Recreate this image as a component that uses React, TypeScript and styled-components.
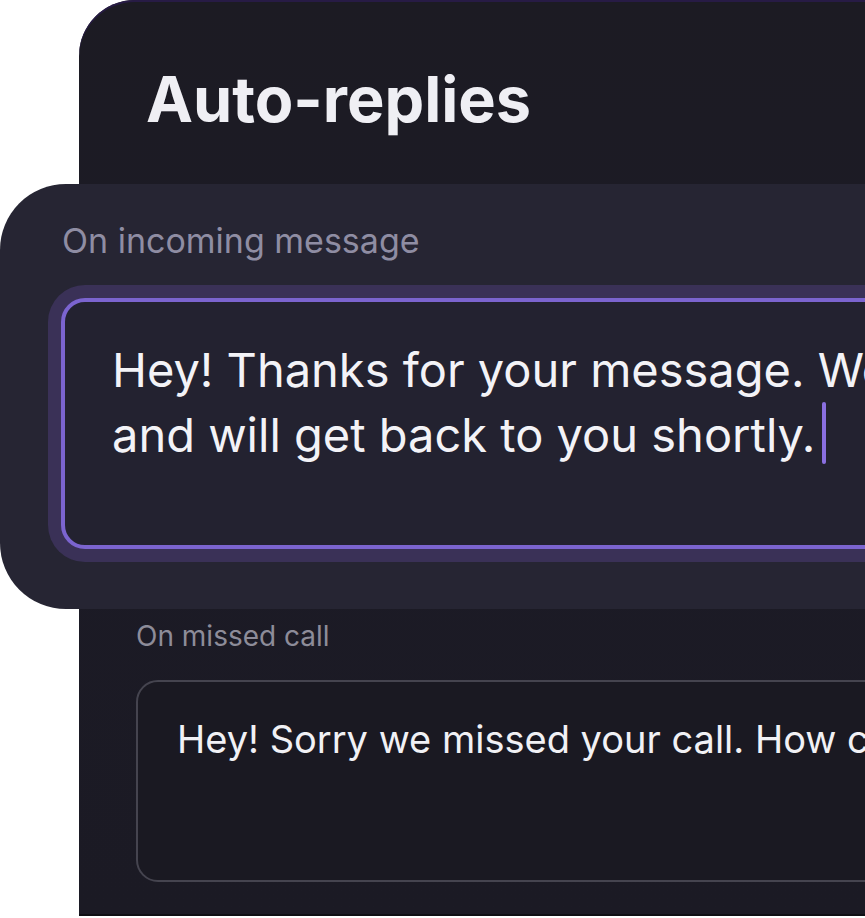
import styled, { createGlobalStyle } from 'styled-components'

const GlobalStyle = createGlobalStyle`
  html, body {
    margin: 0;
    padding: 0;
    background: #ffffff;
  }

  body {
    font-family: Inter, "Noto Sans", "Liberation Sans", sans-serif;
    -webkit-font-smoothing: antialiased;
  }
`

const App = () => {
  return (
    <Page>
      <GlobalStyle />
      <Panel>
        <Title>Auto-replies</Title>

        <FeaturedCard>
          <Label>On incoming message</Label>
          <FocusedField>
            <Line>Hey! Thanks for your message. We’ll be in touch</Line>
            <Line>
              and will get back to you shortly.<Caret />
            </Line>
          </FocusedField>
        </FeaturedCard>

        <Section>
          <SmallLabel>On missed call</SmallLabel>
          <Field>
            <SmallLine>Hey! Sorry we missed your call. How can we help?</SmallLine>
          </Field>
        </Section>
      </Panel>
    </Page>
  )
}

const Page = styled.div`
  width: 865px;
  height: 918px;
  overflow: hidden;
  background: #ffffff;
`

const Panel = styled.div`
  margin-left: 79px;
  height: 916px;
  box-sizing: border-box;
  background: linear-gradient(180deg, #1c1b23 0%, #1c1b26 40%, #1b1a24 100%);
  border-top-left-radius: 56px;
  border-bottom: 2px solid #0f0f14;
  box-shadow: inset 0 2px 0 #271b45;
  padding-top: 68px;
`

const Title = styled.h1`
  margin: 0 0 53px 67px;
  font-size: 63px;
  line-height: 63px;
  font-weight: 700;
  color: #efeff4;
`

const FeaturedCard = styled.div`
  margin-left: -79px;
  width: 1100px;
  height: 425px;
  box-sizing: border-box;
  background: #262533;
  border-radius: 66px 0 0 66px;
  padding: 37px 0 0 61px;
`

const Label = styled.div`
  font-size: 34px;
  line-height: 40px;
  color: #8f8da3;
  margin: 0 0 37px 1px;
`

const FocusedField = styled.div`
  height: 251px;
  box-sizing: border-box;
  background: #232230;
  border: 4px solid #7b64cf;
  border-radius: 24px;
  box-shadow: 0 0 0 13px #3a3157;
  padding: 35px 0 0 47px;
`

const Line = styled.div`
  font-size: 47px;
  line-height: 65px;
  color: #f3f3f7;
  white-space: nowrap;
`

const Caret = styled.span`
  display: inline-block;
  width: 4px;
  height: 62px;
  margin-left: 7px;
  border-radius: 2px;
  background: #8a6fe0;
  vertical-align: -12px;
`

const Section = styled.div`
  padding: 11px 0 0 57px;
`

const SmallLabel = styled.div`
  font-size: 28px;
  line-height: 32px;
  color: #8d8c99;
  margin-bottom: 28px;
`

const Field = styled.div`
  width: 900px;
  height: 202px;
  box-sizing: border-box;
  background: #1a1922;
  border: 2px solid #45444f;
  border-radius: 22px;
  padding: 34px 0 0 39px;
`

const SmallLine = styled.div`
  font-size: 38px;
  line-height: 46px;
  color: #f1f1f5;
  white-space: nowrap;
`

export default App
